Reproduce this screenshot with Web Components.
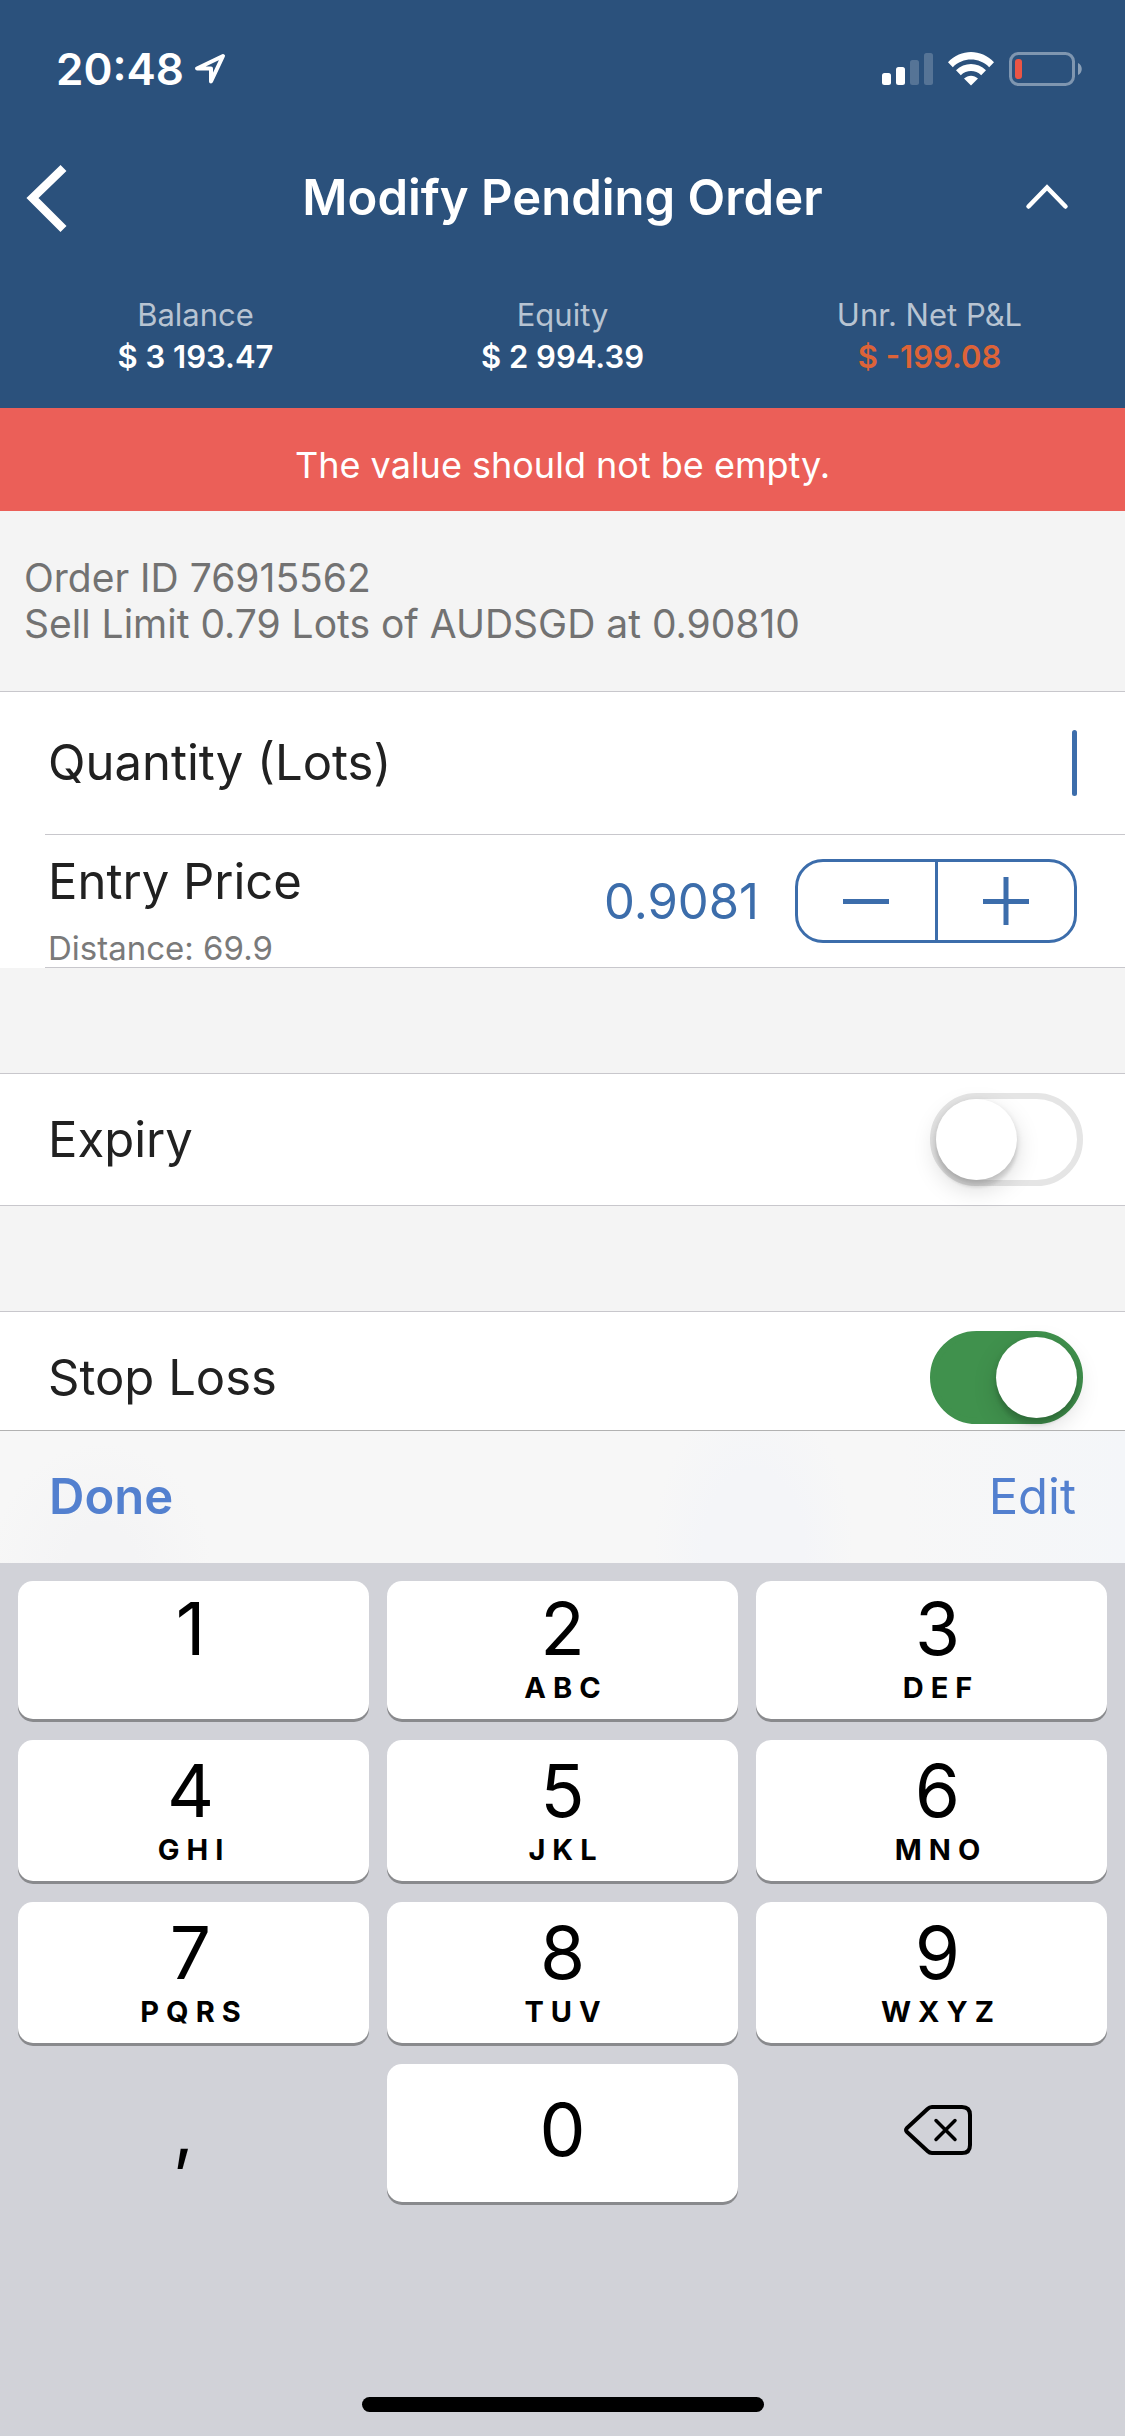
<!DOCTYPE html>
<html lang="en">
<head>
<meta charset="utf-8">
<meta name="viewport" content="width=device-width, initial-scale=1">
<title>Modify Pending Order</title>
<style>
  html, body { margin: 0; height: 100%; }
  body {
    font-family: Inter, "Liberation Sans", sans-serif;
    color: #212121;
    background: #f4f4f4;
  }
</style>
</head>
<body>
<order-app></order-app>

<script>
const base = `
  *, *::before { box-sizing: border-box; }
  button, input { font: inherit; color: inherit; background: none; border: 0; margin: 0; padding: 0; outline: 0; }
  button { cursor: pointer; }
  svg { display: block; }
`;

function define(name, render) {
  customElements.define(name, class extends HTMLElement {
    connectedCallback() {
      if (this.shadowRoot) return;
      const [css, html] = render(this);
      this.attachShadow({ mode: 'open' }).innerHTML = `<style>${base}${css}</style>${html}`;
    }
  });
}

define('status-bar', () => [`
  :host { display: flex; align-items: center; justify-content: space-between; height: 132px; padding: 6px 43px 0 56px; }
  .time, .icons { display: flex; align-items: center; }
  .time { gap: 10px; font-size: 44px; line-height: 54px; font-weight: 600; }
  .icons { gap: 15px; }
`, `
  <div class="time"><span>20:48</span>
    <svg width="32" height="32" viewBox="0 0 32 32" fill="none" stroke="#fff" stroke-width="4" stroke-linejoin="round"><path d="M29 3 3 15.500H17V28.500Z"/></svg>
  </div>
  <div class="icons">
    <svg width="51" height="34" viewBox="0 0 51 34" fill="#fff"><rect y="21" width="9" height="12" rx="2.500"/><rect x="14" y="15" width="9" height="18" rx="2.500"/><g opacity=".2"><rect x="28" y="8" width="9" height="25" rx="2.500"/><rect x="42" y="1" width="9" height="32" rx="2.500"/></g></svg>
    <svg width="46" height="34" viewBox="0 0 46 34" fill="#fff"><path d="M0 10.200C13 -3.400 33 -3.400 46 10.200L41.200 15.200C31 5 15 5 4.800 15.200Z"/><path d="M8 18.300C16.500 9.900 29.500 9.900 38 18.300L33.200 23.200C27.500 17.700 18.500 17.700 12.800 23.200Z"/><path d="M16 26.600C20 22.700 26 22.700 30 26.600L23 33.500Z"/></svg>
    <svg width="73" height="34" viewBox="0 0 73 34"><rect x="1.500" y="1.500" width="63" height="31" rx="8" fill="none" stroke="#fff" stroke-opacity=".4" stroke-width="3"/><path d="M69 11C74 13 74 21 69 23Z" fill="#fff" fill-opacity=".45"/><rect x="6" y="7" width="7" height="20" rx="3" fill="#eb5545"/></svg>
  </div>
`]);

define('nav-bar', () => [`
  :host { display: grid; grid-template-columns: 1fr auto 1fr; align-items: center; height: 132px; padding: 0 54px 0 24px; }
  h1 { grid-column: 2; margin: 0 0 0 30px; font-size: 49px; line-height: 60px; font-weight: 600; text-align: center; }
  button { justify-self: start; }
  button:last-child { justify-self: end; }
`, `
  <button aria-label="Back"><svg width="48" height="70" viewBox="0 0 48 70" fill="none" stroke="#fff" stroke-width="8.500"><path d="M39.500 5 8.500 35 39.500 66"/></svg></button>
  <h1><slot></slot></h1>
  <button aria-label="Collapse"><svg width="48" height="30" viewBox="0 0 48 30" fill="none" stroke="#fff" stroke-width="4.500" stroke-linecap="round"><path d="M5.500 23.500 24 4.500 42.500 23.500"/></svg></button>
`]);

define('account-stat', el => [`
  :host { display: block; text-align: center; font-size: 31px; line-height: 42px; }
  .label { color: #b8c4d2; }
  .value { font-weight: 600; color: ${el.hasAttribute('loss') ? '#dd6338' : '#fff'}; }
`, `<div class="label">${el.getAttribute('label')}</div><div class="value"><slot></slot></div>`]);

define('account-summary', () => [`
  :host { display: grid; grid-template-columns: repeat(3, 1fr); padding: 30px 12px; }
`, `
  <account-stat label="Balance">$ 3 193.47</account-stat>
  <account-stat label="Equity">$ 2 994.39</account-stat>
  <account-stat label="Unr. Net P&amp;L" loss>$ -199.08</account-stat>
`]);

define('error-banner', () => [`
  :host { display: block; padding: 36px 24px 25px; font-size: 36px; line-height: 42px; text-align: center; color: #fff; background: #eb5f58; }
`, `<div role="alert"><slot></slot></div>`]);

define('order-summary', () => [`
  :host { display: block; padding: 44px 24px; font-size: 39px; line-height: 46px; color: #727272; border-bottom: 1px solid #c8c7cc; }
`, `<slot></slot>`]);

const rowCss = `
  label { font-size: 49px; line-height: 60px; }
`;

define('quantity-row', () => [`${rowCss}
  :host { display: block; background: #fff; padding-left: 45px; }
  .row { display: flex; align-items: center; height: 143px; padding: 0 48px 0 3px; border-bottom: 1px solid #c8c7cc; }
  input { flex: 1; min-width: 0; height: 66px; font-size: 49px; text-align: right; color: #3c6dab; caret-color: transparent; }
  .caret { width: 5px; height: 66px; border-radius: 3px; background: #3c6dab; }
`, `<div class="row"><label for="qty"><slot></slot></label><input id="qty" type="text" inputmode="decimal"><span class="caret"></span></div>`]);

define('price-row', el => [`${rowCss}
  :host { display: block; background: #fff; padding-left: 45px; }
  .row { display: flex; align-items: center; height: 133px; padding: 0 48px 0 3px; border-bottom: 1px solid #c8c7cc; }
  .text { display: flex; flex-direction: column; gap: 16px; align-self: flex-start; padding-top: 17px; }
  .note { font-size: 33px; line-height: 40px; color: #7a7a7a; }
  input { flex: 1; min-width: 0; height: 66px; margin-right: 36px; font-size: 49px; text-align: right; color: #3c6dab; }
  .stepper { display: flex; width: 282px; height: 84px; border: 3px solid #3c6dab; border-radius: 28px; }
  .stepper button { flex: 1; display: flex; align-items: center; justify-content: center; }
  .stepper button + button { border-left: 3px solid #3c6dab; }
`, `<div class="row">
  <div class="text"><label for="price">${el.getAttribute('label')}</label><span class="note"><slot></slot></span></div>
  <input id="price" type="text" inputmode="decimal" value="${el.getAttribute('value')}">
  <div class="stepper">
    <button aria-label="Decrease"><svg width="46" height="46" viewBox="0 0 46 46" fill="#3c6dab"><path d="M0 21H46V26H0Z"/></svg></button>
    <button aria-label="Increase"><svg width="46" height="48" viewBox="0 0 46 48" fill="#3c6dab"><path d="M0 22H20.500V0H25.500V22H46V27H25.500V48H20.500V27H0Z"/></svg></button>
  </div></div>`]);

define('switch-row', el => [`${rowCss}
  :host { display: flex; align-items: center; justify-content: space-between; height: 133px; margin-top: 105px; padding: 0 42px 0 48px; background: #fff; border: solid #c8c7cc; border-width: 1px 0; }
  input { appearance: none; display: flex; width: 153px; height: 93px; border: 6px solid #e5e5e5; border-radius: 47px; cursor: pointer; }
  input::before { content: ""; width: 81px; height: 81px; border-radius: 50%; background: #fff; box-shadow: 0 9px 24px rgba(0,0,0,.15), 0 8px 3px rgba(0,0,0,.06), 0 3px 6px rgba(0,0,0,.14); }
  input:checked { justify-content: flex-end; background: #40914d; border-color: #40914d; }
`, `<label for="toggle"><slot></slot></label><input id="toggle" type="checkbox" role="switch"${el.hasAttribute('on') ? ' checked' : ''}>`]);

define('keyboard-toolbar', () => [`
  :host {
    display: flex; align-items: center; justify-content: space-between; height: 133px; padding: 0 49px;
    border-top: 1px solid #b2b2b2; color: #5380cf; font-size: 49px; line-height: 60px;
    background:
      radial-gradient(ellipse 100px 160px at 67% 90%, #f4f5f8 50%, transparent 100%),
      radial-gradient(ellipse 110px 120px at 9% 100%, #f4f4f5 30%, transparent 100%),
      linear-gradient(90deg, #f7f7f7 80%, #f4f6f9);
  }
  .done { font-weight: 600; }
`, `<button class="done">Done</button><button>Edit</button>`]);

define('number-key', el => {
  const letters = el.getAttribute('letters');
  return [`
  :host { display: grid; }
  button {
    display: flex; flex-direction: column; align-items: center; justify-content: flex-end; gap: 4px;
    padding: 0 6px 16px 0; border-radius: 15px; background: #fff; box-shadow: 0 3px 0 #898a8d; color: #000;
  }
  .digit { font-size: 73px; line-height: 80px; }
  .letters { height: 30px; padding-left: 7px; font-size: 29px; line-height: 30px; font-weight: 700; letter-spacing: 7px; }
  :host([column="2"]) button { padding-right: 0; }
  :host([column="3"]) button { padding: 0 0 16px 12px; }
  :host([single]) button { justify-content: center; padding-bottom: 6px; }
  :host([plain]) button { background: none; box-shadow: none; }
  :host([column="1"][plain]) button { padding-right: 20px; }
`, `<button><span class="digit"><slot></slot></span>${letters === null ? '' : `<span class="letters">${letters}</span>`}</button>`];
});

define('number-pad', () => [`
  :host { display: grid; grid-template-columns: repeat(3, 1fr); grid-template-rows: 138px 141px 141px 138px; gap: 21px 18px; padding: 18px 18px 0; }
`, `
  <number-key column="1" letters="">1</number-key>
  <number-key column="2" letters="ABC">2</number-key>
  <number-key column="3" letters="DEF">3</number-key>
  <number-key column="1" letters="GHI">4</number-key>
  <number-key column="2" letters="JKL">5</number-key>
  <number-key column="3" letters="MNO">6</number-key>
  <number-key column="1" letters="PQRS">7</number-key>
  <number-key column="2" letters="TUV">8</number-key>
  <number-key column="3" letters="WXYZ">9</number-key>
  <number-key column="1" single plain>,</number-key>
  <number-key column="2" single>0</number-key>
  <number-key column="3" single plain><svg role="img" aria-label="Delete" width="70" height="52" viewBox="0 0 70 52" fill="none" stroke="#000" stroke-width="4" stroke-linejoin="round" stroke-linecap="round"><path d="M29 3H59Q67 3 67 11V41Q67 49 59 49H29Q26.500 49 24.500 47L4 28Q2 26 4 24L24.500 5Q26.500 3 29 3Z"/><path d="M33 16.500 52 35.500M52 16.500 33 35.500" stroke-width="3.500"/></svg></number-key>
`]);

define('home-indicator', () => [`
  :host { display: flex; justify-content: center; padding: 195px 0 24px; }
  span { width: 402px; height: 15px; border-radius: 8px; background: #000; }
`, `<span></span>`]);

define('order-app', () => [`
  :host { display: flex; flex-direction: column; height: 100vh; }
  header { color: #fff; background: #2b517c; }
  main { flex: 1; min-height: 0; overflow: hidden; }
  footer { background: #d1d2d8; }
`, `
  <header>
    <status-bar></status-bar>
    <nav-bar>Modify Pending Order</nav-bar>
    <account-summary></account-summary>
  </header>
  <main>
    <error-banner>The value should not be empty.</error-banner>
    <order-summary>Order ID 76915562<br>Sell Limit 0.79 Lots of AUDSGD at 0.90810</order-summary>
    <form>
      <quantity-row>Quantity (Lots)</quantity-row>
      <price-row label="Entry Price" value="0.9081">Distance: 69.9</price-row>
      <switch-row>Expiry</switch-row>
      <switch-row on>Stop Loss</switch-row>
    </form>
  </main>
  <footer>
    <keyboard-toolbar></keyboard-toolbar>
    <number-pad></number-pad>
    <home-indicator></home-indicator>
  </footer>
`]);
</script>
</body>
</html>
